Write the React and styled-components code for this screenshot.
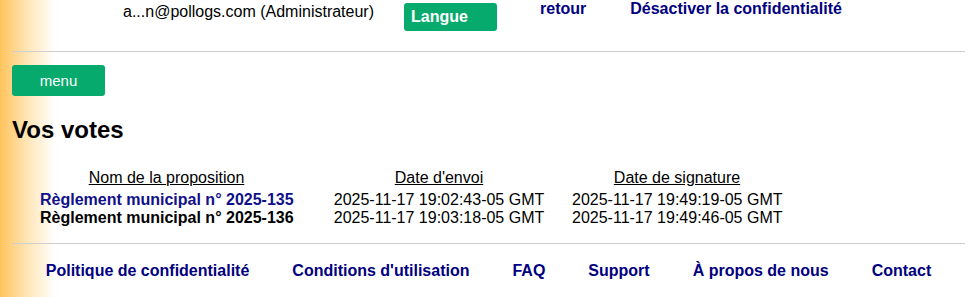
import React from "react";
import styled, { createGlobalStyle } from "styled-components";

const GREEN = "#06aa6c";
const NAVY = "#000080";
const RULE = "#cfcfcf";

const GlobalStyle = createGlobalStyle`
  html, body {
    margin: 0;
    padding: 0;
  }
  body {
    font-family: "Liberation Sans", Arial, sans-serif;
    font-size: 16px;
    color: #000;
    background: linear-gradient(to right, #ffc35c 0, #ffe3b0 25px, #ffffff 55px) no-repeat;
    background-color: #fff;
    min-height: 297px;
  }
`;

const Page = styled.div`
  padding: 0 13px 0 12px;
`;

const TopBar = styled.div`
  display: flex;
  align-items: flex-start;
  padding-left: 111px;
  height: 51px;
`;

const UserInfo = styled.span`
  margin-top: 3px;
  line-height: 18px;
`;

const LangButton = styled.button`
  margin-left: 30px;
  margin-top: 3px;
  width: 93px;
  height: 28px;
  border: none;
  border-radius: 3px;
  background: ${GREEN};
  color: #fff;
  font-family: inherit;
  font-size: 16px;
  font-weight: bold;
  text-align: left;
  padding: 0 7px;
`;

const TopLink = styled.a`
  margin-left: ${p => p.$gap}px;
  margin-top: 0;
  line-height: 18px;
  color: ${NAVY};
  font-weight: bold;
  text-decoration: none;
`;

const Rule = styled.hr`
  margin: 0;
  border: none;
  border-top: 1px solid ${RULE};
  height: 0;
`;

const MenuButton = styled.button`
  display: block;
  margin-top: 13px;
  width: 93px;
  height: 31px;
  border: none;
  border-radius: 3px;
  background: ${GREEN};
  color: #fff;
  font-family: inherit;
  font-size: 15px;
  padding: 0;
`;

const Title = styled.h2`
  margin: 20px 0 0;
  font-size: 24px;
  line-height: 28px;
  font-weight: bold;
`;

const VotesTable = styled.div`
  display: grid;
  grid-template-columns: 253px 252px 237px;
  margin: 25px 0 0 28px;
  line-height: 18px;
`;

const Cell = styled.div`
  text-align: center;
  padding-left: ${p => p.$pad || 0}px;
  color: ${p => p.$color || "#000"};
  font-weight: ${p => (p.$bold ? "bold" : "normal")};
  white-space: nowrap;
`;

const HeadCell = styled(Cell)`
  text-decoration: underline;
  padding-bottom: 4px;
`;

const FootRule = styled(Rule)`
  margin-top: 16px;
`;

const Footer = styled.nav`
  display: flex;
  justify-content: center;
  gap: 43px;
  padding-top: 18px;
`;

const FootLink = styled.a`
  color: ${NAVY};
  font-weight: bold;
  text-decoration: none;
  line-height: 18px;
`;

const votes = [
  {
    name: "Règlement municipal n° 2025-135",
    sent: "2025-11-17 19:02:43-05 GMT",
    signed: "2025-11-17 19:49:19-05 GMT",
    color: "#10108a"
  },
  {
    name: "Règlement municipal n° 2025-136",
    sent: "2025-11-17 19:03:18-05 GMT",
    signed: "2025-11-17 19:49:46-05 GMT",
    color: "#000"
  }
];

const links = [
  "Politique de confidentialité",
  "Conditions d'utilisation",
  "FAQ",
  "Support",
  "À propos de nous",
  "Contact"
];

const App = () => (
  <>
    <GlobalStyle />
    <Page>
      <TopBar>
        <UserInfo>a...n@pollogs.com (Administrateur)</UserInfo>
        <LangButton>Langue</LangButton>
        <TopLink $gap={43}>retour</TopLink>
        <TopLink $gap={44}>Désactiver la confidentialité</TopLink>
      </TopBar>
      <Rule />
      <MenuButton>menu</MenuButton>
      <Title>Vos votes</Title>
      <VotesTable>
        <HeadCell>Nom de la proposition</HeadCell>
        <HeadCell $pad={40}>Date d'envoi</HeadCell>
        <HeadCell $pad={27}>Date de signature</HeadCell>
        {votes.map(v => (
          <React.Fragment key={v.name}>
            <Cell $bold $color={v.color}>{v.name}</Cell>
            <Cell $pad={40}>{v.sent}</Cell>
            <Cell $pad={27}>{v.signed}</Cell>
          </React.Fragment>
        ))}
      </VotesTable>
      <FootRule />
      <Footer>
        {links.map(l => (
          <FootLink key={l}>{l}</FootLink>
        ))}
      </Footer>
    </Page>
  </>
);

export default App;
